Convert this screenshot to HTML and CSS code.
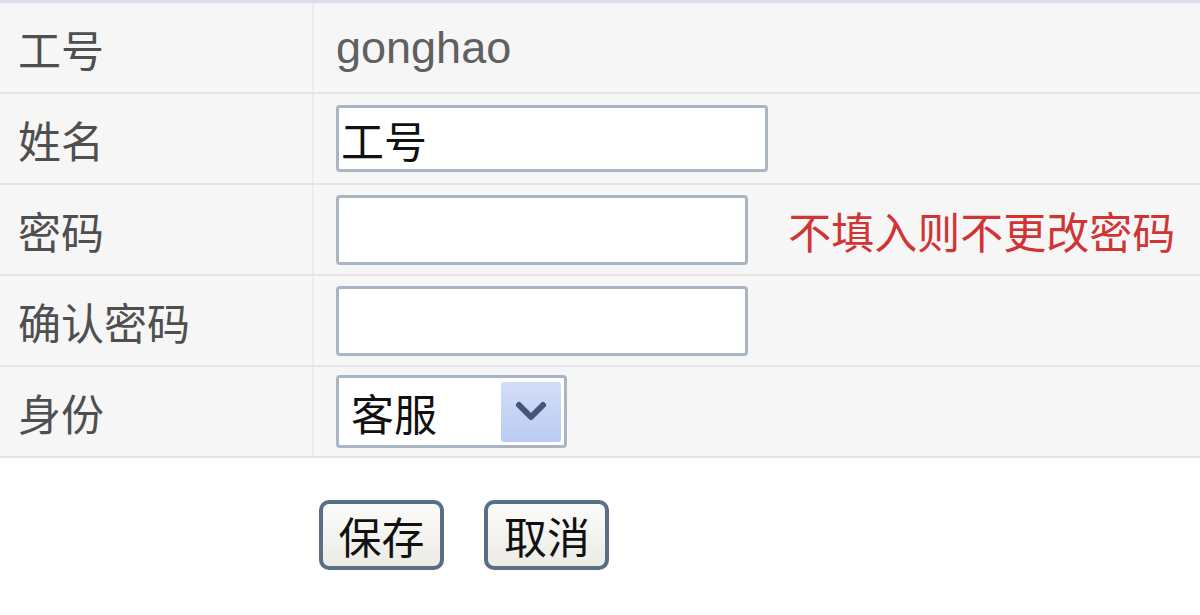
FILE: index.html
```html
<!DOCTYPE html>
<html lang="zh-CN">
<head>
    <meta charset="UTF-8">
    <title>编辑用户</title>
    <link rel="stylesheet" href="styles.css">
</head>
<body>
    <table class="form-table">
        <tr>
            <td class="label">工号</td>
            <td class="field"><span class="value">gonghao</span></td>
        </tr>
        <tr>
            <td class="label">姓名</td>
            <td class="field"><input type="text" class="input-text wide" value="工号"></td>
        </tr>
        <tr>
            <td class="label">密码</td>
            <td class="field">
                <input type="password" class="input-text">
                <span class="tip">不填入则不更改密码</span>
            </td>
        </tr>
        <tr>
            <td class="label">确认密码</td>
            <td class="field"><input type="password" class="input-text"></td>
        </tr>
        <tr>
            <td class="label">身份</td>
            <td class="field">
                <div class="select-box">
                    <span class="select-text">客服</span>
                    <span class="select-arrow">
                        <svg width="40" height="26" viewBox="0 0 40 26">
                            <path d="M8 6 L20 18 L32 6" fill="none" stroke="#46547a" stroke-width="6" stroke-linecap="round" stroke-linejoin="round"/>
                        </svg>
                    </span>
                </div>
            </td>
        </tr>
        <tr class="actions">
            <td></td>
            <td>
                <button class="btn">保存</button>
                <button class="btn">取消</button>
            </td>
        </tr>
    </table>
</body>
</html>
```

FILE: styles.css
```css
body{
    margin: 0;
    background-color: #ffffff;
    font-family: "Liberation Sans", "Noto Sans CJK SC", sans-serif;
}
.form-table{
    width: 100%;
    border-collapse: collapse;
    border-top: 3px solid #d9dee8;
}
.form-table td{
    height: 89px;
    padding: 0;
    background-color: #f6f6f6;
    border-bottom: 2px solid #e4e4e4;
    vertical-align: middle;
}
.label{
    width: 294px;
    padding-left: 18px !important;
    font-size: 43px;
    color: #4f4f4f;
    border-right: 2px solid #ececec;
}
.field{
    padding-left: 22px !important;
    font-size: 44px;
}
.value{
    color: #606060;
    font-size: 45px;
}
.input-text{
    box-sizing: border-box;
    width: 412px;
    height: 70px;
    border: 3px solid #a9b5c5;
    border-radius: 4px;
    background-color: #ffffff;
    padding: 0 2px;
    font-family: "Noto Sans CJK SC", sans-serif;
    font-size: 43px;
    color: #111111;
    vertical-align: middle;
}
.wide{
    width: 432px;
    height: 67px;
}
.tip{
    margin-left: 28px;
    color: #d03434;
    font-size: 43px;
    vertical-align: middle;
}
.select-box{
    box-sizing: border-box;
    width: 231px;
    height: 73px;
    display: flex;
    align-items: center;
    justify-content: space-between;
    border: 3px solid #a9b5c5;
    border-radius: 4px;
    background-color: #ffffff;
    padding: 0 3px 0 12px;
}
.select-text{
    font-family: "Noto Sans CJK SC", sans-serif;
    font-size: 43px;
    color: #111111;
}
.select-arrow{
    width: 60px;
    height: 60px;
    display: flex;
    align-items: center;
    justify-content: center;
    border-radius: 3px;
    background: linear-gradient(#d3def8, #b9cbf2);
}
.form-table .actions td{
    background-color: #ffffff;
    border: none;
    height: auto;
    padding-top: 42px !important;
    vertical-align: top;
}
.actions td:last-child{
    padding-left: 6px !important;
}
.btn{
    box-sizing: border-box;
    width: 125px;
    height: 70px;
    margin-right: 36px;
    border: 4px solid #5a6e84;
    border-radius: 10px;
    background: linear-gradient(#fbfbf9, #ecebe6);
    font-family: "Noto Sans CJK SC", sans-serif;
    font-size: 43px;
    color: #111111;
    padding: 0;
    line-height: 1;
}
```
